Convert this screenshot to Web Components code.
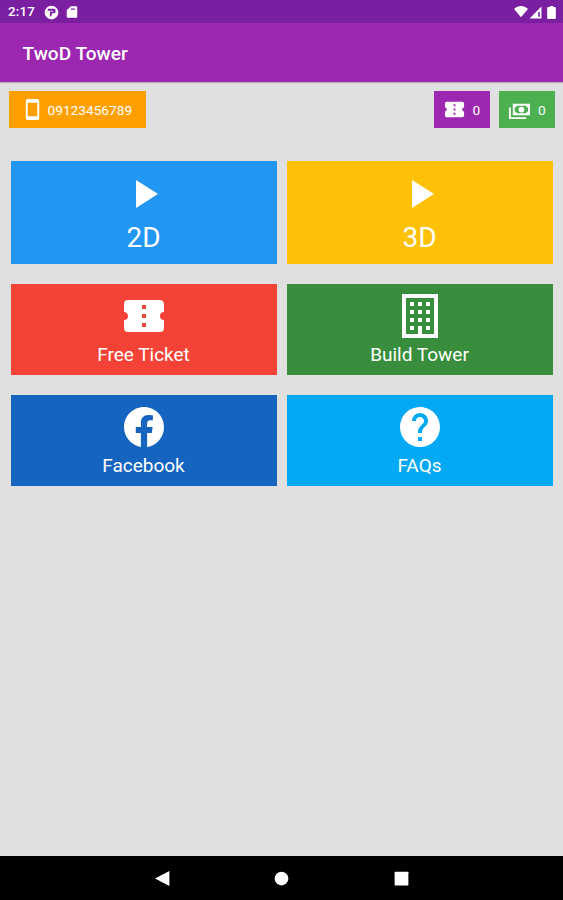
<!DOCTYPE html>
<html lang="en">
<head>
<meta charset="utf-8">
<title>TwoD Tower</title>
<style>
  html, body {
    margin: 0;
    height: 100%;
  }
  body {
    font-family: Roboto, "Liberation Sans", sans-serif;
    overflow: hidden;
  }
</style>
</head>
<body>
<tower-app></tower-app>

<script>
const ICONS = {
  play: 'M8,5V19L19,12Z',
  ticket: 'M13,8.5H11V6.5H13V8.5M13,13H11V11H13V13M13,17.5H11V15.5H13V17.5M22,10V6C22,4.89 21.1,4 20,4H4A2,2 0 0,0 2,6V10C3.11,10 4,10.9 4,12A2,2 0 0,1 2,14V18A2,2 0 0,0 4,20H20A2,2 0 0,0 22,18V14A2,2 0 0,1 20,12A2,2 0 0,1 22,10Z',
  building: 'M3,1H21V23H3ZM5,3V21H11V17H13V21H19V3ZM7,5H9V7H7ZM11,5H13V7H11ZM15,5H17V7H15ZM7,9H9V11H7ZM11,9H13V11H11ZM15,9H17V11H15ZM7,13H9V15H7ZM11,13H13V15H11ZM15,13H17V15H15ZM7,17H9V19H7ZM15,17H17V19H15Z',
  facebook: 'M12 2.04C6.5 2.04 2 6.53 2 12.06C2 17.06 5.66 21.21 10.44 21.96V14.96H7.9V12.06H10.44V9.85C10.44 7.34 11.93 5.96 14.22 5.96C15.31 5.96 16.45 6.15 16.45 6.15V8.62H15.19C13.95 8.62 13.56 9.39 13.56 10.18V12.06H16.34L15.89 14.96H13.56V21.96A10 10 0 0 0 22 12.06C22 6.53 17.5 2.04 12 2.04Z',
  help: 'M15.07,11.25L14.17,12.17C13.45,12.89 13,13.5 13,15H11V14.5C11,13.39 11.45,12.39 12.17,11.67L13.41,10.41C13.78,10.05 14,9.55 14,9C14,7.89 13.1,7 12,7A2,2 0 0,0 10,9H8A4,4 0 0,1 12,5A4,4 0 0,1 16,9C16,9.88 15.64,10.67 15.07,11.25M13,19H11V17H13M12,2A10,10 0 1,0 22,12C22,6.47 17.5,2 12,2Z',
  phone: 'M17,19H7V5H17M17,1H7C5.89,1 5,1.89 5,3V21A2,2 0 0,0 7,23H17A2,2 0 0,0 19,21V3C19,1.89 18.1,1 17,1Z',
  cash: 'M5,6H23V18H5V6M14,9A3,3 0 0,1 17,12A3,3 0 0,1 14,15A3,3 0 0,1 11,12A3,3 0 0,1 14,9M9,8A2,2 0 0,1 7,10V14A2,2 0 0,1 9,16H19A2,2 0 0,1 21,14V10A2,2 0 0,1 19,8H9M1,10H3V20H19V22H1V10Z',
  app: 'M12,1A11,11 0 1,0 23,12A11,11 0 0,0 12,1ZM6,6H16A2.5,2.5 0 0,1 18.5,8.5V10A3,3 0 0,1 15.5,13H12.5V15.5A3,3 0 0,1 9.5,18.5V10.5H15V9H6Z',
  sdcard: 'M10,2H19A2,2 0 0,1 21,4V20A2,2 0 0,1 19,22H5A2,2 0 0,1 3,20V9ZM10,6V8H17V6Z',
  wifi: 'M12,21L0,7C7,0 17,0 24,7Z',
  signal: 'M23,1V23H1ZM17,11V20H20V11Z',
  battery: 'M9,0H15V2H18A2,2 0 0,1 20,4V22A2,2 0 0,1 18,24H6A2,2 0 0,1 4,22V4A2,2 0 0,1 6,2H9Z',
  back: 'M23,0V24L0,12Z',
  home: 'M12,1A11,11 0 1,0 23,12A11,11 0 0,0 12,1Z',
  recent: 'M2,1H22A1,1 0 0,1 23,2V22A1,1 0 0,1 22,23H2A1,1 0 0,1 1,22V2A1,1 0 0,1 2,1Z'
};

class TowerIcon extends HTMLElement {
  constructor() {
    super();
    this.attachShadow({ mode: 'open' });
  }

  connectedCallback() {
    const size = this.getAttribute('size') || 24;
    this.shadowRoot.innerHTML = `
      <style>
        :host { display: block; flex: none; width: ${size}px; height: ${size}px; }
        svg { display: block; width: 100%; height: 100%; fill: currentColor; }
      </style>
      <svg viewBox="0 0 24 24"><path fill-rule="evenodd" d="${ICONS[this.getAttribute('name')]}"/></svg>`;
  }
}

class StatusBar extends HTMLElement {
  constructor() {
    super();
    this.attachShadow({ mode: 'open' });
    this.shadowRoot.innerHTML = `
      <style>
        :host {
          display: flex;
          align-items: center;
          box-sizing: border-box;
          height: 23px;
          padding: 1px 5px 0 8px;
          background: #7b1fa2;
          color: #fff;
        }
        .time { font-size: 13.3px; font-weight: 500; line-height: 20px; width: 36px; letter-spacing: 0.2px; }
        .sd { margin-left: 6px; }
        .wifi { margin-left: auto; }
        .signal { margin-left: 1px; }
        .battery { margin-left: 3px; }
      </style>
      <span class="time">2:17</span>
      <tower-icon name="app" size="15"></tower-icon>
      <tower-icon class="sd" name="sdcard" size="14"></tower-icon>
      <tower-icon class="wifi" name="wifi" size="14"></tower-icon>
      <tower-icon class="signal" name="signal" size="13"></tower-icon>
      <tower-icon class="battery" name="battery" size="13"></tower-icon>`;
  }
}

class AppBar extends HTMLElement {
  constructor() {
    super();
    this.attachShadow({ mode: 'open' });
    this.shadowRoot.innerHTML = `
      <style>
        :host {
          display: flex;
          align-items: center;
          box-sizing: border-box;
          height: 59px;
          padding: 2px 22.5px 0;
          background: #9c27b0;
          color: #fff;
          font-size: 19.1px;
          font-weight: 500;
          box-shadow: 0 1px 1px #bcaac0;
          position: relative;
        }
      </style>
      <slot></slot>`;
  }
}

class InfoChip extends HTMLElement {
  constructor() {
    super();
    this.attachShadow({ mode: 'open' });
  }

  connectedCallback() {
    this.shadowRoot.innerHTML = `
      <style>
        :host {
          display: flex;
          align-items: center;
          box-sizing: border-box;
          height: 37px;
          gap: ${this.getAttribute('gap') || 7}px;
          padding-left: ${this.getAttribute('inset') || 9}px;
          background: ${this.getAttribute('color')};
          color: #fff;
          font-size: 13.7px;
        }
      </style>
      <tower-icon name="${this.getAttribute('icon')}" size="${this.getAttribute('icon-size') || 23}"></tower-icon>
      <slot></slot>`;
  }
}

class MenuTile extends HTMLElement {
  constructor() {
    super();
    this.attachShadow({ mode: 'open' });
  }

  connectedCallback() {
    const large = this.hasAttribute('large');
    this.shadowRoot.innerHTML = `
      <style>
        :host {
          display: flex;
          flex-direction: column;
          align-items: center;
          box-sizing: border-box;
          padding-top: ${large ? 9 : 8}px;
          background: ${this.getAttribute('color')};
          color: #fff;
          font-size: ${large ? 28 : 19}px;
          line-height: ${large ? 40 : 29}px;
        }
      </style>
      <tower-icon name="${this.getAttribute('icon')}" size="48"></tower-icon>
      <span><slot></slot></span>`;
  }
}

class NavBar extends HTMLElement {
  constructor() {
    super();
    this.attachShadow({ mode: 'open' });
    this.shadowRoot.innerHTML = `
      <style>
        :host {
          display: flex;
          align-items: center;
          justify-content: center;
          gap: 104.5px;
          height: 44px;
          background: #000;
          color: #fff;
        }
      </style>
      <tower-icon name="back" size="15"></tower-icon>
      <tower-icon name="home" size="15"></tower-icon>
      <tower-icon name="recent" size="15"></tower-icon>`;
  }
}

class TowerApp extends HTMLElement {
  constructor() {
    super();
    this.attachShadow({ mode: 'open' });
    this.shadowRoot.innerHTML = `
      <style>
        :host {
          display: flex;
          flex-direction: column;
          height: 100vh;
          background: #e0e0e0;
        }
        main { flex: 1; }
        .chips {
          display: flex;
          gap: 9px;
          padding: 9px 8px 0 8.5px;
        }
        .phone { width: 137.5px; margin-right: auto; }
        .count { width: 56px; }
        .grid {
          display: grid;
          grid-template-columns: 1fr 1fr;
          grid-template-rows: 103px 91px 91px;
          gap: 20px 10px;
          padding: 33px 10.5px 0;
        }
      </style>
      <status-bar></status-bar>
      <app-bar>TwoD Tower</app-bar>
      <main>
        <div class="chips">
          <info-chip class="phone" icon="phone" color="#ffa000" inset="12.5" gap="3.5">09123456789</info-chip>
          <info-chip class="count" icon="ticket" color="#9c27b0" inset="8.5">0</info-chip>
          <info-chip class="count" icon="cash" color="#4caf50">0</info-chip>
        </div>
        <div class="grid">
          <menu-tile large icon="play" color="#2196f3">2D</menu-tile>
          <menu-tile large icon="play" color="#ffc107">3D</menu-tile>
          <menu-tile icon="ticket" color="#f44336">Free Ticket</menu-tile>
          <menu-tile icon="building" color="#388e3c">Build Tower</menu-tile>
          <menu-tile icon="facebook" color="#1565c0">Facebook</menu-tile>
          <menu-tile icon="help" color="#03a9f4">FAQs</menu-tile>
        </div>
      </main>
      <nav-bar></nav-bar>`;
  }
}

customElements.define('tower-icon', TowerIcon);
customElements.define('status-bar', StatusBar);
customElements.define('app-bar', AppBar);
customElements.define('info-chip', InfoChip);
customElements.define('menu-tile', MenuTile);
customElements.define('nav-bar', NavBar);
customElements.define('tower-app', TowerApp);
</script>
</body>
</html>
